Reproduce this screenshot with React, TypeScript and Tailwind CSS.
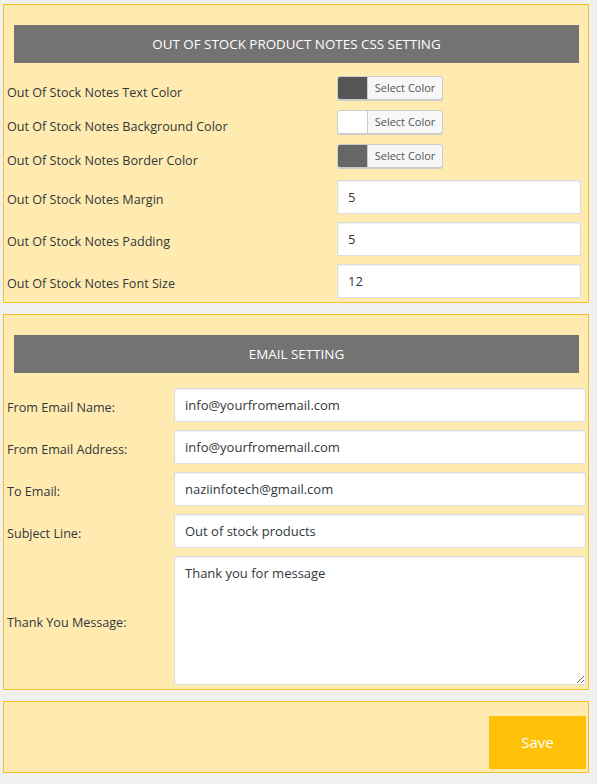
import React from "react"

const font = { fontFamily: '"Open Sans", "Noto Sans", sans-serif' }

function ColorPick({ swatch }: { swatch: string }) {
  return (
    <div className="flex h-[24px] w-[106px] overflow-hidden rounded-[3px] border border-[#cccccc] bg-[#f7f7f7] shadow-[0_1px_0_#cccccc]">
      <span className="h-full w-[30px] border-r border-[#cccccc]" style={{ background: swatch }} />
      <span className="flex flex-1 items-center justify-center text-[11px] text-[#555555]">Select Color</span>
    </div>
  )
}

function TextBox({ value, w }: { value: string; w: string }) {
  return (
    <input
      readOnly
      value={value}
      className={`h-[34px] ${w} border border-[#dddddd] bg-white px-[10px] text-[13px] text-[#32373c] shadow-[inset_0_1px_2px_rgba(0,0,0,0.07)] outline-none`}
    />
  )
}

const colorRows = [
  { label: "Out Of Stock Notes Text Color", swatch: "#555555" },
  { label: "Out Of Stock Notes Background Color", swatch: "#ffffff" },
  { label: "Out Of Stock Notes Border Color", swatch: "#666666" },
]

const numRows = [
  { label: "Out Of Stock Notes Margin", value: "5" },
  { label: "Out Of Stock Notes Padding", value: "5" },
  { label: "Out Of Stock Notes Font Size", value: "12" },
]

const emailRows = [
  { label: "From Email Name:", value: "info@yourfromemail.com" },
  { label: "From Email Address:", value: "info@yourfromemail.com" },
  { label: "To Email:", value: "naziinfotech@gmail.com" },
  { label: "Subject Line:", value: "Out of stock products" },
]

export default function App() {
  return (
    <div className="min-h-screen bg-[#f0f0f0] pt-[4px] pl-[3px] pr-[8px]" style={font}>
      {/* CSS settings */}
      <section className="w-[586px] border border-[#f5c02a] bg-[#ffebb0] pt-[20px]">
        <div className="ml-[10px] mr-[9px] flex h-[38px] items-center justify-center bg-[#737373] text-[13.4px] text-white">
          OUT OF STOCK PRODUCT NOTES CSS SETTING
        </div>
        <div className="mt-[8px]">
          {colorRows.map((r) => (
            <div key={r.label} className="flex h-[34px] items-center">
              <span className="w-[333px] pl-[3px] pt-[10px] text-[12.6px] text-[#32373c]">{r.label}</span>
              <ColorPick swatch={r.swatch} />
            </div>
          ))}
        </div>
        <div className="mt-[3px]">
          {numRows.map((r) => (
            <div key={r.label} className="flex h-[42px] items-center">
              <span className="w-[333px] pl-[3px] pt-[6px] text-[12.6px] text-[#32373c]">{r.label}</span>
              <TextBox value={r.value} w="w-[244px]" />
            </div>
          ))}
        </div>
      </section>

      {/* Email settings */}
      <section className="mt-[11px] w-[586px] border border-[#f5c02a] bg-[#ffebb0] pt-[20px]">
        <div className="ml-[10px] mr-[9px] flex h-[38px] items-center justify-center bg-[#737373] text-[13.4px] text-white">
          EMAIL SETTING
        </div>
        <div className="mt-[11px]">
          {emailRows.map((r) => (
            <div key={r.label} className="flex h-[42px] items-center">
              <span className="w-[170px] pl-[3px] pt-[6px] text-[12.6px] text-[#32373c]">{r.label}</span>
              <TextBox value={r.value} w="w-[412px]" />
            </div>
          ))}
          <div className="flex h-[137px] items-center">
            <span className="w-[170px] pl-[3px] pt-[6px] text-[12.6px] text-[#32373c]">Thank You Message:</span>
            <textarea
              readOnly
              value="Thank you for message"
              className="h-[129px] w-[412px] border border-[#dddddd] bg-white px-[10px] py-[7px] text-[13px] text-[#32373c] shadow-[inset_0_1px_2px_rgba(0,0,0,0.07)] outline-none"
            />
          </div>
        </div>
      </section>

      {/* Save */}
      <section className="mt-[11px] flex w-[586px] justify-end border border-[#f5c02a] bg-[#ffebb0] pt-[14px] pb-[3px] pr-[2px]">
        <button className="h-[53px] w-[97px] bg-[#ffc107] text-[15px] text-white">Save</button>
      </section>
    </div>
  )
}
